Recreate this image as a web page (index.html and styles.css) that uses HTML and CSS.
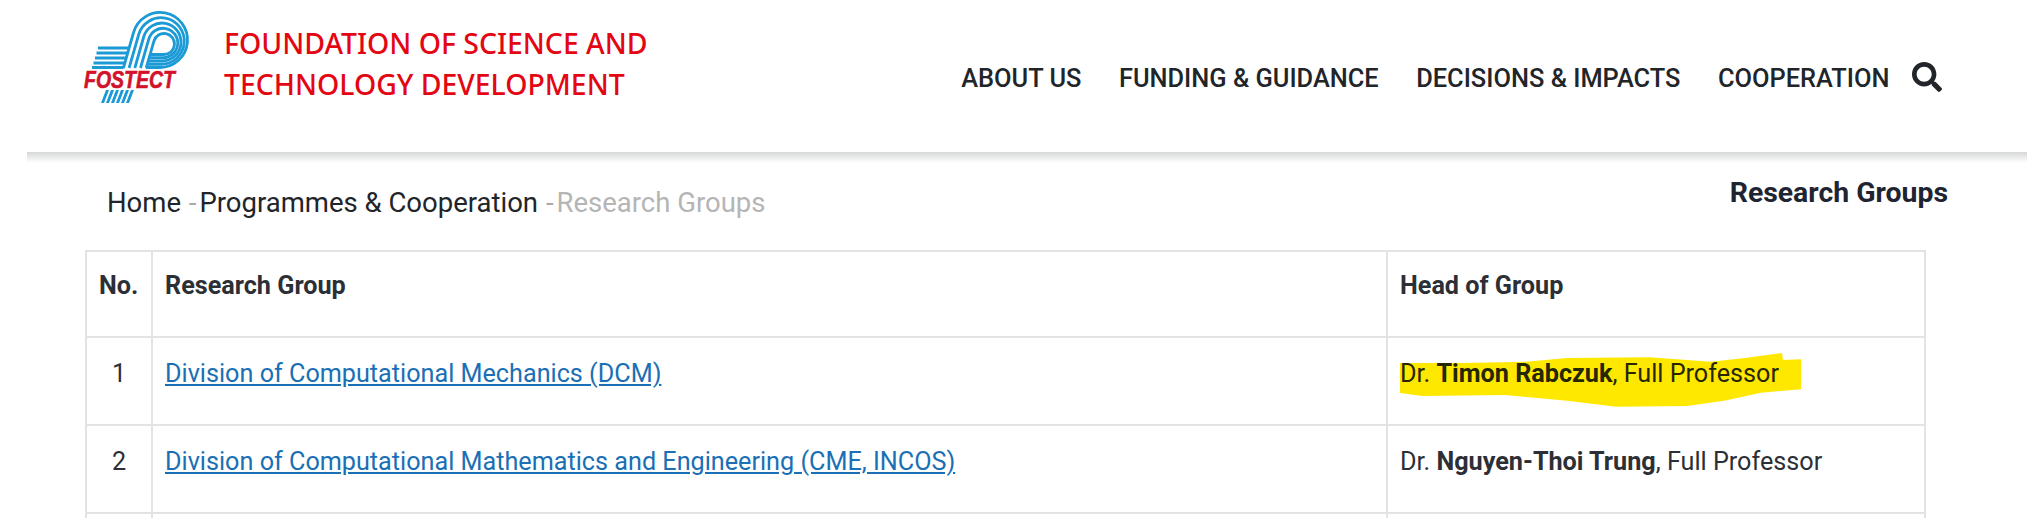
FILE: index.html
```html
<!DOCTYPE html>
<html lang="en">
<head>
<meta charset="utf-8">
<title>Research Groups</title>
<link rel="stylesheet" href="styles.css">
</head>
<body>
<header class="site-header">
  <div class="brand">
    <svg class="logo" viewBox="0 0 110 100" width="110" height="100">
      <g class="logo-lines">
        <path d="M18 40H49M16.500 45H47.700M15 50H46.200M13.500 55H44.800M12 59.500H43.500"/>
        <path d="M66.200 60L73.910 33.100A10.500 10.500 0 1 1 84 46.500H70"/>
        <path d="M60.500 60L68.830 30.930A14.750 14.750 0 1 1 83 49.750H69"/>
        <path d="M54.800 60L63.740 28.760A19 19 0 1 1 82 53H68"/>
        <path d="M49.100 60L58.660 26.580A23.250 23.250 0 1 1 81 56.250H67"/>
        <path d="M43.400 60L53.570 24.410A27.500 27.500 0 1 1 80 59.500H66"/>
      </g>
      <text class="logo-word" x="4" y="80" textLength="91" lengthAdjust="spacingAndGlyphs">FOSTECT</text>
      <path class="logo-legs" d="M26 82H29L24 95H21ZM31 82H34L29 95H26ZM36 82H39L34 95H31ZM41 82H44L39 95H36ZM46 82H49L44 95H41ZM51 82H54L49 95H46Z"/>
    </svg>
    <div class="brand-name">FOUNDATION OF SCIENCE AND<br>TECHNOLOGY DEVELOPMENT</div>
  </div>
  <nav class="main-nav">
    <a>ABOUT US</a>
    <a>FUNDING &amp; GUIDANCE</a>
    <a>DECISIONS &amp; IMPACTS</a>
    <a>COOPERATION</a>
    <svg class="search" viewBox="0 0 512 512" width="30" height="30"><path d="M505 442.700L405.300 343c-4.500-4.500-10.600-7-17-7H372c27.600-35.300 44-79.700 44-128C416 93.100 322.900 0 208 0S0 93.100 0 208s93.100 208 208 208c48.300 0 92.700-16.400 128-44v16.300c0 6.400 2.500 12.500 7 17l99.700 99.700c9.400 9.400 24.600 9.400 33.900 0l28.300-28.300c9.400-9.400 9.400-24.600.1-34zM208 336c-70.700 0-128-57.200-128-128 0-70.700 57.200-128 128-128 70.700 0 128 57.200 128 128 0 70.700-57.200 128-128 128z"/></svg>
  </nav>
</header>
<main class="content">
  <div class="crumb-row">
    <div class="crumbs"><span>Home</span> <i>-</i><span>Programmes &amp; Cooperation</span> <i>-</i><em>Research Groups</em></div>
    <h1>Research Groups</h1>
  </div>
  <table>
    <tr class="head"><th class="c1">No.</th><th class="c2">Research Group</th><th class="c3">Head of Group</th></tr>
    <tr><td class="num">1</td><td><a>Division of Computational Mechanics (DCM)</a></td>
      <td class="mark-cell"><svg class="mark" viewBox="0 0 401 54" width="401" height="54"><path d="M0 10L64 10L126 8.700L167 5L249 4.300L311 8.700L345 5L382 0L383 7L401 6.300V36.300L361 39.700L324 47.700L287 53L216 53.700L167 47.700L105 42L22 43L0 40Z"/></svg><span class="mark-text">Dr. <b>Timon Rabczuk</b>, Full Professor</span></td></tr>
    <tr><td class="num">2</td><td><a>Division of Computational Mathematics and Engineering (CME, INCOS)</a></td><td>Dr. <b>Nguyen-Thoi Trung</b>, Full Professor</td></tr>
    <tr><td class="num">&nbsp;</td><td></td><td></td></tr>
  </table>
</main>
</body>
</html>
```
FILE: styles.css
```css
* { box-sizing: border-box; }
html, body { margin: 0; padding: 0; background: #fff; height: 518px; overflow: hidden; }
body { font-family: Roboto, "Liberation Sans", sans-serif; color: #212529; }
.site-header {
  position: relative;
  margin-left: 27px;
  height: 154px;
  display: flex;
  align-items: flex-start;
  border-bottom: 2px solid #cfd0d0;
}
.site-header::after {
  content: "";
  position: absolute;
  left: 0;
  right: 0;
  top: 100%;
  height: 11px;
  background: linear-gradient(#d6d7d7, #fff);
}
.brand { display: flex; margin: 8px 0 0 53px; }
.logo { flex: none; overflow: visible; }
.logo-lines { fill: none; stroke: #1b9ad6; stroke-width: 2.800; }
.logo-word { font: italic 700 24px "Liberation Sans", sans-serif; fill: #d2112a; stroke: #d2112a; stroke-width: .6px; }
.logo-legs { fill: #1b9ad6; }
.brand-name {
  margin: 15px 0 0 34px;
  font: 500 28.400px/41px "Noto Sans", sans-serif;
  color: #e30613;
  white-space: nowrap;
}
.main-nav { display: flex; margin-left: auto; padding: 58px 0 0; margin-right: 85px; gap: 37.500px; font: 500 25.400px/40px Roboto, sans-serif; color: #212529; }
.main-nav a { white-space: nowrap; }
.search { margin: 4px 0 0 -15px; fill: #212529; }
.content { padding: 0 79px 0 85px; }
.crumb-row { display: flex; justify-content: space-between; height: 96px; }
.crumbs { margin: 31px 0 0 22px; font-size: 27.500px; line-height: 36px; }
.crumbs i { font-style: normal; color: #aaa; margin: 0 3px 0 1px; }
.crumbs em { font-style: normal; color: #b5b5b5; }
h1 { margin: 21px 0 0 0; font-size: 28.400px; line-height: 36px; font-weight: 700; color: #1f2433; }
table { width: 1841px; border-collapse: collapse; font-size: 25.200px; line-height: 30px; table-layout: fixed; color: #2c3036; }
th, td { border: 2px solid #e3e3e3; padding: 21px 12px 0; height: 88px; vertical-align: top; text-align: left; font-weight: 400; }
th { font-weight: 700; padding-top: 19px; }
.head th { height: 86px; }
.c1 { width: 66px; }
.c3 { width: 538px; }
.num { text-align: center; }
td a { color: #1a6fb5; text-decoration: underline; }
td b { font-weight: 700; }
.mark-cell { position: relative; }
.mark { position: absolute; left: 12px; top: 15px; fill: #ffe800; }
.mark-text { position: relative; color: #262600; }
```
